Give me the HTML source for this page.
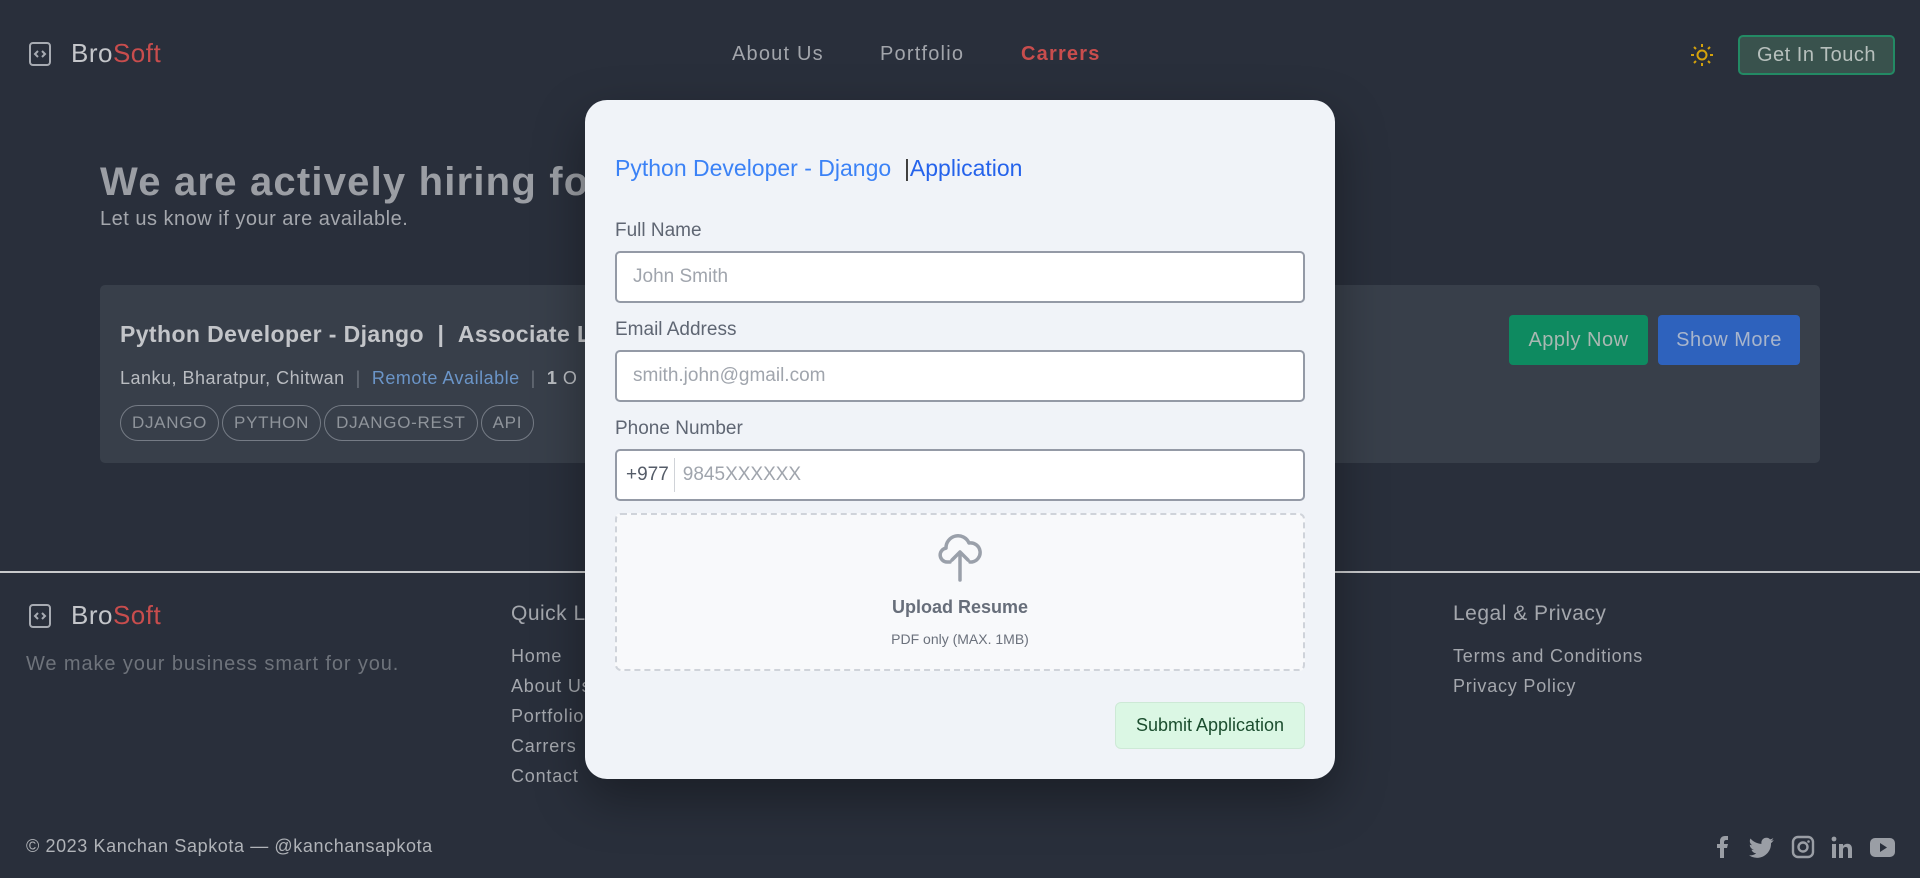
<!DOCTYPE html>
<html><head><meta charset="utf-8"><style>
*{margin:0;padding:0;box-sizing:border-box}
body{width:1920px;height:878px;background:#292f3b;font-family:"Liberation Sans",sans-serif;position:relative;overflow:hidden;color:#b4b7bd;letter-spacing:.5px}
.a{position:absolute;white-space:nowrap}
.logo{display:flex;align-items:center}
.logo .t{font-size:26px;color:#c4c6ca;margin-left:20px;letter-spacing:.5px}
.logo .t span{color:#c84d4d}
.nav{font-size:20px;color:#a2a5ab;top:43px;letter-spacing:1.2px}
.tag{display:inline-block;border:1px solid #757b85;border-radius:18px;padding:0 11px;height:36px;line-height:34px;font-size:17px;color:#8f949b;margin-right:3px;letter-spacing:.7px}
.ft{font-size:18px;color:#a4a7ad;letter-spacing:.8px}
.modal{position:absolute;left:585px;top:100px;width:750px;height:679px;background:#f0f3f8;border-radius:22px;box-shadow:0 20px 50px rgba(0,0,0,.35);font-family:"Liberation Sans",sans-serif;letter-spacing:0}
.lbl{position:absolute;left:30px;font-size:19px;color:#5f6673}
.inp{position:absolute;left:30px;width:690px;height:52px;border:2px solid #949aa6;border-radius:5px;background:#fff;font-size:19px;color:#a0a5ad;line-height:48px;padding-left:16px}
</style></head><body>
<div class="a logo" style="left:29px;top:38px"><svg width="22" height="24" viewBox="0 0 22 24" fill="none" stroke="#a7abb2" stroke-width="2"><rect x="1" y="1" width="20" height="22" rx="3"/><path d="M9 9l-3 3 3 3M13 9l3 3-3 3"/></svg><div class="t">Bro<span>Soft</span></div></div>
<div class="a nav" style="left:732px">About Us</div>
<div class="a nav" style="left:880px">Portfolio</div>
<div class="a nav" style="left:1021px;color:#c84d4d;font-weight:bold">Carrers</div>
<svg class="a" style="left:1689px;top:42px" width="26" height="26" viewBox="0 0 26 26" fill="none" stroke="#d4a20c" stroke-width="2"><circle cx="13" cy="13" r="4.5"/><path d="M13 2v3M13 21v3M2 13h3M21 13h3M5 5l2 2M19 19l2 2M5 21l2-2M19 7l2-2"/></svg>
<div class="a" style="left:1738px;top:35px;width:157px;height:40px;border:2px solid #238a64;border-radius:5px;background:#39524d;color:#b7c0bd;font-size:20px;line-height:36px;text-align:center;letter-spacing:.5px">Get In Touch</div>
<div class="a" style="left:100px;top:160px;font-size:40px;font-weight:bold;color:#9b9ea4;letter-spacing:1.2px">We are actively hiring for</div>
<div class="a" style="left:100px;top:208px;font-size:20px;color:#a4a7ad">Let us know if your are available.</div>
<div class="a" style="left:100px;top:285px;width:1720px;height:178px;background:#383f4a;border-radius:5px"></div>
<div class="a" style="left:120px;top:321px;font-size:23px;font-weight:bold;color:#c3c5c9;letter-spacing:.4px">Python Developer - Django&nbsp; | &nbsp;Associate L</div>
<div class="a" style="left:120px;top:368px;font-size:18px;color:#b9bcc1">Lanku, Bharatpur, Chitwan &nbsp;<span style="color:#6b717b">|</span>&nbsp; <span style="color:#6b95c8">Remote Available</span> &nbsp;<span style="color:#6b717b">|</span>&nbsp; <b>1</b> O</div>
<div class="a" style="left:120px;top:405px"><span class="tag">DJANGO</span><span class="tag">PYTHON</span><span class="tag">DJANGO-REST</span><span class="tag">API</span></div>
<div class="a" style="left:1509px;top:315px;width:139px;height:50px;background:#0e8a60;border-radius:4px;color:#a9b8b2;font-size:20px;line-height:50px;text-align:center;letter-spacing:.5px">Apply Now</div>
<div class="a" style="left:1658px;top:315px;width:142px;height:50px;background:#2e62bd;border-radius:4px;color:#a8b5cc;font-size:20px;line-height:50px;text-align:center;letter-spacing:.5px">Show More</div>
<div class="a" style="left:0;top:571px;width:1920px;height:2px;background:#c9cacc"></div>
<div class="a logo" style="left:29px;top:600px"><svg width="22" height="24" viewBox="0 0 22 24" fill="none" stroke="#a7abb2" stroke-width="2"><rect x="1" y="1" width="20" height="22" rx="3"/><path d="M9 9l-3 3 3 3M13 9l3 3-3 3"/></svg><div class="t">Bro<span>Soft</span></div></div>
<div class="a" style="left:26px;top:653px;font-size:20px;color:#6e737b;letter-spacing:.9px">We make your business smart for you.</div>
<div class="a" style="left:511px;top:602px;font-size:21px;color:#a4a7ad">Quick Links</div>
<div class="a ft" style="left:511px;top:646px">Home</div>
<div class="a ft" style="left:511px;top:676px">About Us</div>
<div class="a ft" style="left:511px;top:706px">Portfolio</div>
<div class="a ft" style="left:511px;top:736px">Carrers</div>
<div class="a ft" style="left:511px;top:766px">Contact</div>
<div class="a" style="left:1453px;top:602px;font-size:21px;color:#a4a7ad">Legal &amp; Privacy</div>
<div class="a ft" style="left:1453px;top:646px">Terms and Conditions</div>
<div class="a ft" style="left:1453px;top:676px">Privacy Policy</div>
<div class="a" style="left:26px;top:836px;font-size:18px;color:#b0b3b8;letter-spacing:.6px">© 2023 Kanchan Sapkota — @kanchansapkota</div>
<svg class="a" style="left:1712px;top:834px" width="190" height="26" viewBox="0 0 190 26" fill="#9a9ea5">
<path d="M8 24V14H5v-4h3V7c0-3 2-5 5-5h3v4h-2c-1 0-2 1-2 2v2h4l-1 4h-3v10z"/>
<path d="M62 6c-1 .5-2 .7-3 .8 1-.6 2-1.6 2.3-2.7-1 .6-2 1-3.2 1.3a5 5 0 0 0-8.6 4.5C45 9.6 41 7.6 38.5 4.5c-1.4 2.4-.6 5.3 1.6 6.7-.8 0-1.6-.3-2.3-.6 0 2.4 1.7 4.5 4 5-.7.2-1.5.2-2.3.1.7 2 2.5 3.4 4.7 3.5A10 10 0 0 1 37 21.3 14 14 0 0 0 59 9.2c1-.8 2-1.9 3-3.2z"/>
<rect x="81" y="3" width="20" height="20" rx="5" fill="none" stroke="#9a9ea5" stroke-width="2.4"/><circle cx="91" cy="13" r="4.5" fill="none" stroke="#9a9ea5" stroke-width="2.4"/><circle cx="96.5" cy="7.5" r="1.3"/>
<rect x="120" y="10" width="4" height="14"/><circle cx="122" cy="5" r="2.4"/><path d="M127 10h4v2c1-1.5 2.5-2.3 4.5-2.3 3 0 4.5 2 4.5 5.5V24h-4v-8c0-2-.7-3-2.3-3s-2.7 1-2.7 3v8h-4z"/>
<rect x="158" y="4" width="25" height="19" rx="5"/><path d="M168 9v9l7-4.5z" fill="#292f3b"/>
</svg>
<div class="modal">
<div class="a" style="left:30px;top:55px;font-size:23px;color:#3b82f6">Python Developer - Django &nbsp;<span style="color:#333">|</span><span style="color:#2563eb">Application</span></div>
<div class="lbl" style="top:120px">Full Name</div>
<div class="inp" style="top:151px">John Smith</div>
<div class="lbl" style="top:219px">Email Address</div>
<div class="inp" style="top:250px">smith.john@gmail.com</div>
<div class="lbl" style="top:318px">Phone Number</div>
<div class="inp" style="top:349px;padding-left:9px"><span style="color:#555c68">+977</span><span style="display:inline-block;width:1px;height:34px;background:#d0d3d8;vertical-align:middle;margin:0 8px 0 5px"></span>9845XXXXXX</div>
<div class="a" style="left:30px;top:413px;width:690px;height:158px;border:2px dashed #cfd3da;border-radius:6px;background:#f8f9fb"></div>
<svg class="a" style="left:353px;top:432px" width="44" height="50" viewBox="0 0 44 50" fill="none" stroke="#9aa0aa" stroke-width="3.5" stroke-linecap="round" stroke-linejoin="round"><path d="M12 30H9a7 7 0 0 1-1-13.9A12 12 0 0 1 31 11a9 9 0 0 1 3 19h-2"/><path d="M22 48V20M14 28l8-8 8 8"/></svg>
<div class="a" style="left:0;width:750px;text-align:center;top:497px;font-size:18px;font-weight:bold;color:#676e7a">Upload Resume</div>
<div class="a" style="left:0;width:750px;text-align:center;top:531px;font-size:14px;color:#6b717c">PDF only (MAX. 1MB)</div>
<div class="a" style="left:530px;top:602px;width:190px;height:47px;background:#dbf7e4;border:1px solid #cde9d6;border-radius:6px;color:#1b4d2e;font-size:18px;line-height:45px;text-align:center">Submit Application</div>
</div>
</body></html>
